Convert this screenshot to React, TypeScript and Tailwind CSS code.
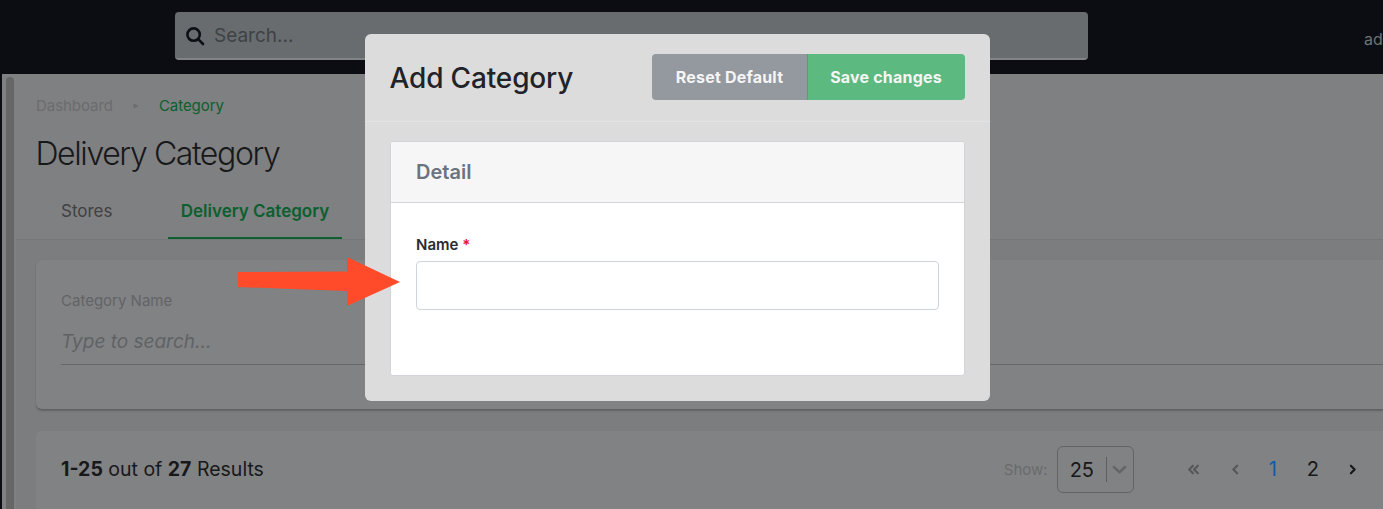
import React from "react";

function Icon({ d, className }: { d: string; className?: string }) {
  return (
    <svg viewBox="0 0 12 12" className={className} fill="none" stroke="currentColor" strokeWidth="2" strokeLinecap="round" strokeLinejoin="round">
      <path d={d} />
    </svg>
  );
}

export default function App() {
  return (
    <div className="relative flex h-[509px] w-[1383px] flex-col overflow-hidden bg-[#0b0d13] font-['Inter',sans-serif]">
      {/* top bar */}
      <header className="flex h-[74px] shrink-0 items-start pl-[175px] pt-[12px]">
        <div className="flex h-[48px] w-[913px] shrink-0 items-center rounded-[4px] border-b-2 border-[#808485] bg-[#686c6e] pl-[10px] pt-[2px]">
          <svg viewBox="0 0 20 20" className="h-[20px] w-[20px] text-[#0d0f14]" fill="none" stroke="currentColor" strokeWidth="2.6" strokeLinecap="round">
            <circle cx="8.6" cy="8.6" r="6.2" />
            <path d="M13.4 13.4 18 18" />
          </svg>
          <span className="ml-[9px] text-[19px] text-[#3f4245]">Search...</span>
        </div>
        <span className="ml-[276px] mt-[17px] shrink-0 whitespace-nowrap text-[16px] leading-[20px] text-[#727375]">admin</span>
      </header>

      <div className="flex min-h-0 flex-1">
        {/* scrollbar rail */}
        <div className="flex w-[16px] shrink-0 pl-[2px]">
          <div className="w-full bg-[#7f8081] pl-[4px] pr-[2px] pt-[3px]">
            <div className="h-full rounded-t-[4px] bg-[#666666]" />
          </div>
        </div>

        {/* page */}
        <main className="flex min-w-0 flex-1 flex-col bg-[#7b7d7e]">
          <div className="flex h-[166px] shrink-0 flex-col border-b border-[#747677] bg-[#7f8081]">
            <nav className="flex items-center pl-[20px] pt-[23px] text-[15px] leading-[17px] tracking-[-0.05px]">
              <span className="text-[#6a6c6e]">Dashboard</span>
              <svg viewBox="0 0 6 6" className="ml-[20px] h-[6px] w-[6px] text-[#6a6c6e]" fill="currentColor">
                <path d="M0.5 0.5 5.5 3 0.5 5.5z" />
              </svg>
              <span className="ml-[20px] text-[#0c5f2e]">Category</span>
            </nav>
            <h1 className="pl-[19.5px] pt-[20px] text-[32px] font-light leading-[39px] tracking-[-1.4px] text-[#17181a]">Delivery Category</h1>
            <div className="mt-auto flex h-[56px] items-stretch pl-[32px]">
              <div className="flex w-[120px] items-center pl-[13px] pt-[2px] text-[17px] text-[#3f4144]">Stores</div>
              <div className="flex w-[174px] items-center justify-center border-b-2 border-[#0f5f30] pt-[3px] text-[17px] font-semibold text-[#0c5f2e]">Delivery Category</div>
            </div>
          </div>

          <section className="ml-[20px] mt-[20px] h-[150px] shrink-0 rounded-l-[6px] border-b border-[#5f6061] bg-[#818283] pl-[25px] pt-[32px] shadow-[0_1px_2px_rgba(0,0,0,0.2)]">
            <div className="text-[15px] leading-[17px] text-[#616467]">Category Name</div>
            <div className="mt-[21px] h-[35px] border-b border-[#666768] text-[19px] italic leading-[24px] text-[#5f6265]">Type to search...</div>
          </section>

          <section className="ml-[20px] mt-[21px] flex h-[80px] shrink-0 items-start rounded-tl-[6px] bg-[#818283] pl-[25px] pt-[27px]">
            <div className="text-[19.5px] leading-[22px] text-[#17181a]">
              <b className="font-bold">1-25</b> out of <b className="font-bold">27</b> Results
            </div>
            <div className="ml-auto flex items-start">
              <span className="mt-[3px] text-[15px] leading-[17px] text-[#696b6e]">Show:</span>
              <div className="-mt-[12px] ml-[9px] flex h-[47px] w-[77px] items-center rounded-[6px] border border-[#636466] pl-[12px]">
                <span className="text-[20px] text-[#17181a]">25</span>
                <span className="ml-[12px] h-[25px] w-px bg-[#5e5f61]" />
                <Icon d="M1.5 4 6 8.2 10.5 4" className="ml-[5px] h-[15px] w-[15px] text-[#636568]" />
              </div>
              <div className="ml-[53px] flex h-[22px] items-center pr-[24px] text-[20px] text-[#17181a]">
                <Icon d="M5.5 2.5 2 6l3.5 3.5M10 2.5 6.500 6l3.500 3.500" className="h-[13px] w-[13px] text-[#55575a]" />
                <Icon d="M7.500 2.500 4 6l3.500 3.500" className="ml-[29px] h-[13px] w-[13px] text-[#55575a]" />
                <span className="ml-[27px] text-[#0a5cb0]">1</span>
                <span className="ml-[30px]">2</span>
                <Icon d="M4.500 2.500 8 6l-3.500 3.500" className="ml-[27px] h-[13px] w-[13px] text-[#17181a]" />
              </div>
            </div>
          </section>
        </main>
      </div>

      {/* modal */}
      <div className="absolute left-[365px] top-[34px] flex h-[367px] w-[625px] flex-col rounded-[6px] bg-[#dcdcdc]">
        <div className="flex h-[88px] shrink-0 items-start justify-between border-b border-[#e2e3e6] pl-[24.5px] pr-[25px] pt-[20px]">
          <h2 className="pt-[1px] text-[28px] font-medium leading-[46px] tracking-[-0.15px] text-[#212329]">Add Category</h2>
          <div className="flex h-[46px] text-[16px] font-bold tracking-[0.2px] text-[#f5f5f5]">
            <div className="flex w-[155px] items-center justify-center rounded-l-[4px] bg-[#94989f]">Reset Default</div>
            <div className="flex w-[158px] items-center justify-center rounded-r-[4px] border-l border-[#4fa272] bg-[#5cb97f] pr-[1px]">Save changes</div>
          </div>
        </div>
        <div className="mx-[25px] mt-[19px] flex h-[235px] flex-col overflow-hidden rounded-[3px] border border-[#d3d4d9] bg-white">
          <div className="flex h-[61px] shrink-0 items-center border-b border-[#d3d4d9] bg-[#f6f6f6] pl-[25px] text-[20px] font-semibold text-[#6b7280]">Detail</div>
          <div className="px-[25px] pt-[33px]">
            <div className="text-[15px] font-semibold leading-[17px] text-[#2a2c30]">
              Name <span className="text-[#e8112d]">*</span>
            </div>
            <div className="mt-[8px] h-[49px] rounded-[4px] border border-[#ced4da] bg-white" />
          </div>
        </div>
      </div>

      {/* annotation arrow */}
      <svg className="absolute left-[230px] top-[250px] h-[65px] w-[180px]" viewBox="230 250 180 65">
        <path d="M238 272 347 271.500V257L400 282 347 306V291L238 287z" fill="#ff4b29" />
      </svg>
    </div>
  );
}
